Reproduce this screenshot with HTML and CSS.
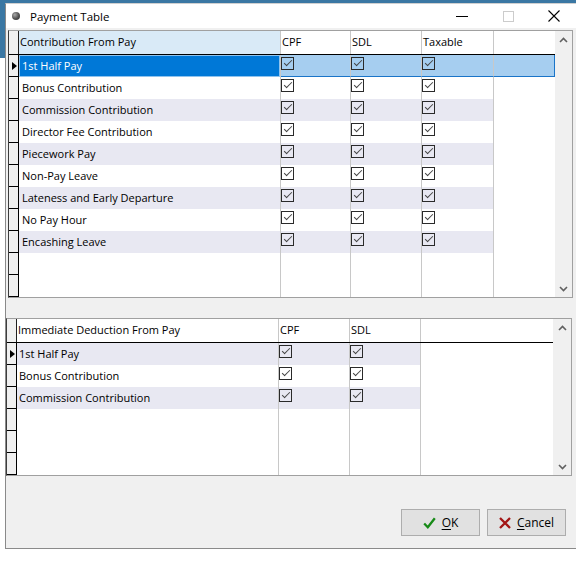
FILE: index.html
```html
<!DOCTYPE html>
<html>
<head>
<meta charset="utf-8">
<title>Payment Table</title>
<link rel="stylesheet" href="styles.css">
</head>
<body>
<div class="desktop"></div>
<div class="window">
  <div class="titlebar">
    <span class="appicon"></span>
    <span class="title">Payment Table</span>
    <div class="caps">
      <span class="cap"><svg width="12" height="2" viewBox="0 0 12 2"><path d="M0 1.5H12" stroke="#000" stroke-width="1"/></svg></span>
      <span class="cap"><svg width="11" height="11" viewBox="0 0 11 11"><rect x="0.5" y="0.5" width="10" height="10" fill="none" stroke="#cccccc"/></svg></span>
      <span class="cap"><svg width="12" height="12" viewBox="0 0 12 12"><path d="M0.5 0.5L11.5 11.5M11.5 0.5L0.5 11.5" stroke="#000" stroke-width="1.1"/></svg></span>
    </div>
  </div>
  <div class="client">
    <div class="grid g1">
      <div class="gmain">
        <div class="row head">
          <div class="ind"></div>
          <div class="c name hname">Contribution From Pay</div>
          <div class="c cpf">CPF</div>
          <div class="c sdl">SDL</div>
          <div class="c tax">Taxable</div>
          <div class="c fill"></div>
        </div>
        <div class="row sel">
          <div class="ind cur"></div>
          <div class="c name">1st Half Pay</div>
          <div class="c cpf"><i class="cb"></i></div>
          <div class="c sdl"><i class="cb"></i></div>
          <div class="c tax"><i class="cb"></i></div>
          <div class="c fill"></div>
        </div>
        <div class="row">
          <div class="ind"></div>
          <div class="c name">Bonus Contribution</div>
          <div class="c cpf"><i class="cb"></i></div>
          <div class="c sdl"><i class="cb"></i></div>
          <div class="c tax"><i class="cb"></i></div>
          <div class="c fill"></div>
        </div>
        <div class="row alt">
          <div class="ind"></div>
          <div class="c name">Commission Contribution</div>
          <div class="c cpf"><i class="cb"></i></div>
          <div class="c sdl"><i class="cb"></i></div>
          <div class="c tax"><i class="cb"></i></div>
          <div class="c fill"></div>
        </div>
        <div class="row">
          <div class="ind"></div>
          <div class="c name">Director Fee Contribution</div>
          <div class="c cpf"><i class="cb"></i></div>
          <div class="c sdl"><i class="cb"></i></div>
          <div class="c tax"><i class="cb"></i></div>
          <div class="c fill"></div>
        </div>
        <div class="row alt">
          <div class="ind"></div>
          <div class="c name">Piecework Pay</div>
          <div class="c cpf"><i class="cb"></i></div>
          <div class="c sdl"><i class="cb"></i></div>
          <div class="c tax"><i class="cb"></i></div>
          <div class="c fill"></div>
        </div>
        <div class="row">
          <div class="ind"></div>
          <div class="c name">Non-Pay Leave</div>
          <div class="c cpf"><i class="cb"></i></div>
          <div class="c sdl"><i class="cb"></i></div>
          <div class="c tax"><i class="cb"></i></div>
          <div class="c fill"></div>
        </div>
        <div class="row alt">
          <div class="ind"></div>
          <div class="c name">Lateness and Early Departure</div>
          <div class="c cpf"><i class="cb"></i></div>
          <div class="c sdl"><i class="cb"></i></div>
          <div class="c tax"><i class="cb"></i></div>
          <div class="c fill"></div>
        </div>
        <div class="row">
          <div class="ind"></div>
          <div class="c name">No Pay Hour</div>
          <div class="c cpf"><i class="cb"></i></div>
          <div class="c sdl"><i class="cb"></i></div>
          <div class="c tax"><i class="cb"></i></div>
          <div class="c fill"></div>
        </div>
        <div class="row alt">
          <div class="ind"></div>
          <div class="c name">Encashing Leave</div>
          <div class="c cpf"><i class="cb"></i></div>
          <div class="c sdl"><i class="cb"></i></div>
          <div class="c tax"><i class="cb"></i></div>
          <div class="c fill"></div>
        </div>
        <div class="row">
          <div class="ind"></div>
          <div class="c name"></div><div class="c cpf"></div><div class="c sdl"></div><div class="c tax"></div><div class="c fill"></div>
        </div>
        <div class="row">
          <div class="ind"></div>
          <div class="c name"></div><div class="c cpf"></div><div class="c sdl"></div><div class="c tax"></div><div class="c fill"></div>
        </div>
      </div>
      <div class="vs">
        <span class="arrow"><svg width="9" height="6" viewBox="0 0 9 6"><path d="M1 5L4.5 1.5L8 5" fill="none" stroke="#606060" stroke-width="1.6"/></svg></span>
        <span class="arrow"><svg width="9" height="6" viewBox="0 0 9 6"><path d="M1 1L4.5 4.5L8 1" fill="none" stroke="#606060" stroke-width="1.6"/></svg></span>
      </div>
    </div>

    <div class="grid g2">
      <div class="gmain">
        <div class="row head">
          <div class="ind"></div>
          <div class="c name">Immediate Deduction From Pay</div>
          <div class="c cpf">CPF</div>
          <div class="c sdl">SDL</div>
          <div class="c fill"></div>
        </div>
        <div class="row alt">
          <div class="ind cur"></div>
          <div class="c name">1st Half Pay</div>
          <div class="c cpf"><i class="cb"></i></div>
          <div class="c sdl"><i class="cb"></i></div>
          <div class="c fill"></div>
        </div>
        <div class="row">
          <div class="ind"></div>
          <div class="c name">Bonus Contribution</div>
          <div class="c cpf"><i class="cb"></i></div>
          <div class="c sdl"><i class="cb"></i></div>
          <div class="c fill"></div>
        </div>
        <div class="row alt">
          <div class="ind"></div>
          <div class="c name">Commission Contribution</div>
          <div class="c cpf"><i class="cb"></i></div>
          <div class="c sdl"><i class="cb"></i></div>
          <div class="c fill"></div>
        </div>
        <div class="row">
          <div class="ind"></div>
          <div class="c name"></div><div class="c cpf"></div><div class="c sdl"></div><div class="c fill"></div>
        </div>
        <div class="row">
          <div class="ind"></div>
          <div class="c name"></div><div class="c cpf"></div><div class="c sdl"></div><div class="c fill"></div>
        </div>
        <div class="row">
          <div class="ind"></div>
          <div class="c name"></div><div class="c cpf"></div><div class="c sdl"></div><div class="c fill"></div>
        </div>
      </div>
      <div class="vs">
        <span class="arrow"><svg width="9" height="6" viewBox="0 0 9 6"><path d="M1 5L4.5 1.5L8 5" fill="none" stroke="#606060" stroke-width="1.6"/></svg></span>
        <span class="arrow"><svg width="9" height="6" viewBox="0 0 9 6"><path d="M1 1L4.5 4.5L8 1" fill="none" stroke="#606060" stroke-width="1.6"/></svg></span>
      </div>
    </div>

    <div class="buttons">
      <button class="btn"><svg width="13" height="12" viewBox="0 0 13 12"><path d="M1.2 6.5L4.8 10.2L11.8 1.2" fill="none" stroke="#178a17" stroke-width="2.3"/></svg><span><u>O</u>K</span></button>
      <button class="btn"><svg width="12" height="12" viewBox="0 0 12 12"><path d="M1 1L11 11M11 1L1 11" fill="none" stroke="#a31515" stroke-width="2.3"/></svg><span><u>C</u>ancel</span></button>
    </div>
  </div>
</div>
</body>
</html>
```
FILE: styles.css
```css
html, body {
  margin: 0;
  height: 100%;
  overflow: hidden;
  background: #ffffff;
}
body {
  position: relative;
  font-family: "Open Sans", "Noto Sans", sans-serif;
  color: #000;
}
.desktop {
  height: 58px;
  background: #3a77a3;
}
.window {
  position: absolute;
  left: 5px;
  top: 3px;
  width: 573px;
  height: 546px;
  box-sizing: border-box;
  border: 1px solid #8a8a8a;
  border-top-color: #d0d0d0;
  background: #f0f0f0;
  display: flex;
  flex-direction: column;
}
.titlebar {
  height: 24px;
  flex: none;
  background: #ffffff;
  display: flex;
  align-items: center;
}
.appicon {
  width: 8px;
  height: 8px;
  border-radius: 50%;
  margin-left: 6px;
  background: radial-gradient(circle at 35% 35%, #a8a8a8 0, #505050 55%, #2e2e2e 100%);
  flex: none;
}
.title {
  margin-left: 10px;
  font-size: 11.5px;
}
.caps {
  margin-left: auto;
  display: flex;
  height: 100%;
}
.cap {
  width: 46px;
  display: flex;
  align-items: center;
  justify-content: center;
}
.client {
  flex: 1;
  display: flex;
  flex-direction: column;
  align-items: flex-start;
}
.grid {
  display: flex;
  flex: none;
  box-sizing: border-box;
  background: #ffffff;
  border: 1px solid #a0a0a0;
}
.g1 {
  margin: 2px 0 0 2px;
  width: 565px;
  height: 268px;
  border-left-color: #3c3c3c;
}
.g2 {
  margin: 20px 0 0 0;
  width: 566px;
  height: 158px;
  border-left-color: #3c3c3c;
}
.gmain {
  flex: 1;
  display: flex;
  flex-direction: column;
  overflow: hidden;
}
.row {
  display: flex;
  height: 22px;
  flex: none;
}
.row.head {
  height: 24px;
  box-sizing: border-box;
  border-bottom: 1px solid #000;
}
.ind {
  width: 10px;
  flex: none;
  box-sizing: border-box;
  background: #f0f0f0;
  border-right: 1px solid #000;
  border-bottom: 1px solid #000;
  position: relative;
}
.head .ind {
  border-bottom: none;
  border-right-color: #202020;
}
.ind.cur::after {
  content: "";
  position: absolute;
  left: 3px;
  top: 7px;
  border-left: 5px solid #000;
  border-top: 4px solid transparent;
  border-bottom: 4px solid transparent;
}
.c {
  box-sizing: border-box;
  flex: none;
  border-right: 1px solid #c8c8c8;
  font-size: 11px;
  line-height: 21px;
  white-space: nowrap;
  overflow: hidden;
  padding-left: 0;
}
.c.fill {
  flex: 1;
  border-right: none;
}
.g1 .name { width: 262px; padding-left: 3px; }
.g1 .cpf { width: 70px; }
.g1 .sdl { width: 71px; }
.g1 .tax { width: 72px; }
.g2 .name { width: 262px; padding-left: 2px; }
.g2 .cpf { width: 71px; }
.g2 .sdl { width: 71px; }
.row.head .c {
  line-height: 22px;
  padding-left: 1px;
}
.head .hname {
  background: #d9eaf7;
}
.row.alt .c:not(.fill) {
  background: #e8e8f2;
}
.row.sel .name {
  background: #0078d7;
  color: #ffffff;
  box-shadow: inset 0 0 0 1px #8fc3ee;
}
.row.sel .c:not(.name) {
  background: #a6cef0;
  border-bottom: 1px solid #1a74c8;
}
.row.sel .fill {
  border-right: 1px solid #1a74c8;
}
.cb {
  display: block;
  width: 13px;
  height: 13px;
  box-sizing: border-box;
  border: 1px solid #2a2a2a;
  margin-top: 2px;
  position: relative;
}
.cb::after {
  content: "";
  position: absolute;
  left: 2px;
  top: 2px;
  width: 7px;
  height: 3px;
  border-left: 1.5px solid #444444;
  border-bottom: 1.5px solid #444444;
  transform: rotate(-45deg);
}
.vs {
  width: 17px;
  flex: none;
  background: #f0f0f0;
  display: flex;
  flex-direction: column;
  justify-content: space-between;
}
.g2 .vs {
  width: 18px;
}
.arrow {
  height: 17px;
  display: flex;
  align-items: center;
  justify-content: center;
}
.buttons {
  align-self: stretch;
  display: flex;
  justify-content: flex-end;
  gap: 7px;
  padding-right: 11px;
  margin-top: 33px;
}
.btn {
  width: 79px;
  height: 27px;
  box-sizing: border-box;
  border: 1px solid #adadad;
  background: #e1e1e1;
  display: flex;
  align-items: center;
  justify-content: center;
  gap: 6px;
  font-family: "Open Sans", "Noto Sans", sans-serif;
  font-size: 12px;
  color: #000;
  padding: 0;
}
.btn u {
  text-underline-offset: 2px;
}
```
